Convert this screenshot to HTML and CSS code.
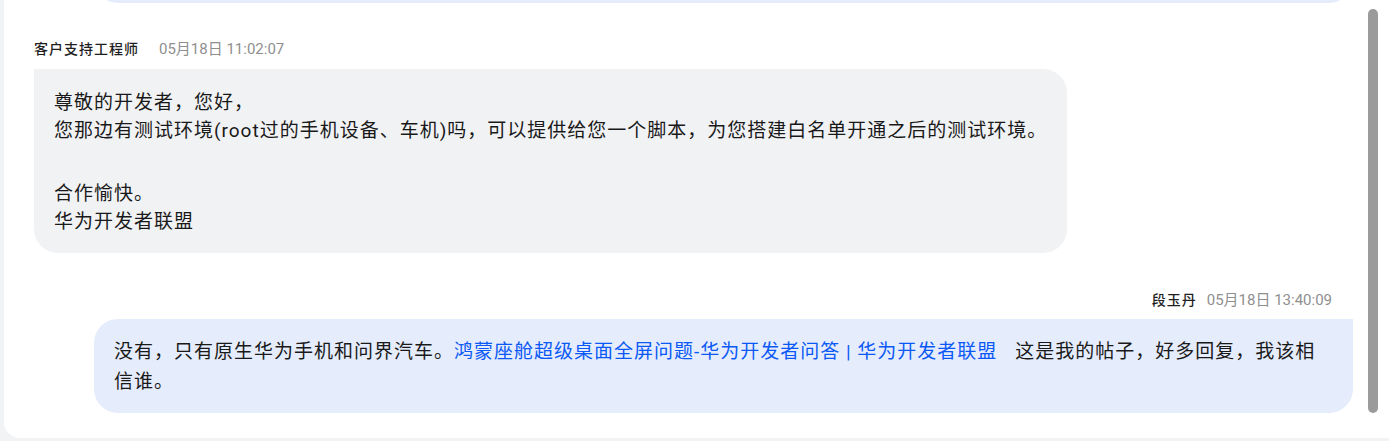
FILE: index.html
```html
<!DOCTYPE html>
<html lang="zh-CN">
<head>
<meta charset="utf-8">
<title>消息</title>
<link rel="stylesheet" href="styles.css">
</head>
<body>
<div class="panel">
  <div class="messages">
    <div class="prev-tail"><div class="prev-bubble"></div></div>

    <div class="msg msg-agent">
      <div class="meta">
        <span class="name name-agent">客户支持工程师</span>
        <span class="time">05月18日 11:02:07</span>
      </div>
      <div class="bubble bubble-agent">
        <p class="para">尊敬的开发者，您好，<br>您那边有测试环境(root过的手机设备、车机)吗，可以提供给您一个脚本，为您搭建白名单开通之后的测试环境。</p>
        <p class="para">合作愉快。<br>华为开发者联盟</p>
      </div>
    </div>

    <div class="msg msg-user">
      <div class="meta meta-user">
        <span class="name">段玉丹</span>
        <span class="time">05月18日 13:40:09</span>
      </div>
      <div class="bubble bubble-user"><span class="plain">没有，只有原生华为手机和问界汽车。</span><a class="link" href="#">鸿蒙座舱超级桌面全屏问题-华为开发者问答 | 华为开发者联盟</a><span class="plain">这是我的帖子，好多回复，我该相信谁。</span></div>
    </div>
  </div>
  <div class="scroll-track"><div class="scroll-thumb"></div></div>
</div>
</body>
</html>
```
FILE: styles.css
```css
html, body {
  margin: 0;
  padding: 0;
}
body {
  width: 1389px;
  height: 441px;
  overflow: hidden;
  background: #f1f3f5;
  font-family: Roboto, "Noto Sans CJK SC", sans-serif;
  color: #191919;
}
.panel {
  margin-left: 4px;
  height: 438px;
  background: #ffffff;
  border-bottom-left-radius: 16px;
  display: flex;
  overflow: hidden;
}
.messages {
  flex: 1;
  display: flex;
  flex-direction: column;
  padding-left: 30px;
  min-width: 0;
}
.prev-tail {
  height: 3px;
  overflow: hidden;
  display: flex;
  align-items: flex-end;
  margin-left: 60px;
}
.prev-bubble {
  flex: 1;
  height: 48px;
  flex-shrink: 0;
  background: #e5ecfb;
  border-radius: 24px 0 24px 24px;
}
.msg {
  display: flex;
  flex-direction: column;
}
.msg-agent {
  margin-top: 36px;
  align-items: flex-start;
}
.msg-user {
  margin-top: 37px;
  align-items: flex-end;
  padding-left: 60px;
}
.meta {
  display: flex;
  align-items: center;
  height: 20px;
  line-height: 20px;
  margin-bottom: 10px;
}
.meta-user {
  padding-right: 21px;
  margin-bottom: 9px;
}
.name {
  font-size: 14px;
  font-weight: 500;
  letter-spacing: 1px;
  color: #1f1f1f;
}
.name-agent {
  margin-right: 10px;
}
.time {
  font-size: 15px;
  color: #8f8f8f;
  margin-left: 10px;
}
.bubble {
  font-size: 19px;
  letter-spacing: 1px;
  box-sizing: border-box;
}
.bubble-agent {
  background: #f1f2f4;
  border-radius: 0 24px 24px 24px;
  padding: 20px 20px 17px 20px;
  line-height: 28px;
}
.para {
  margin: 0;
}
.para + .para {
  margin-top: 35px;
}
.bubble-user {
  align-self: stretch;
  background: #e5ecfb;
  border-radius: 24px 0 24px 24px;
  padding: 18px 20px 16px 20px;
  line-height: 30px;
}
.link {
  color: #0a59f7;
  text-decoration: none;
  margin-right: 18px;
}
.scroll-track {
  width: 36px;
  flex-shrink: 0;
  padding: 9px 11px 0 15px;
  box-sizing: border-box;
}
.scroll-thumb {
  width: 10px;
  height: 404px;
  border-radius: 5px;
  background: #9b9b9b;
}
```
